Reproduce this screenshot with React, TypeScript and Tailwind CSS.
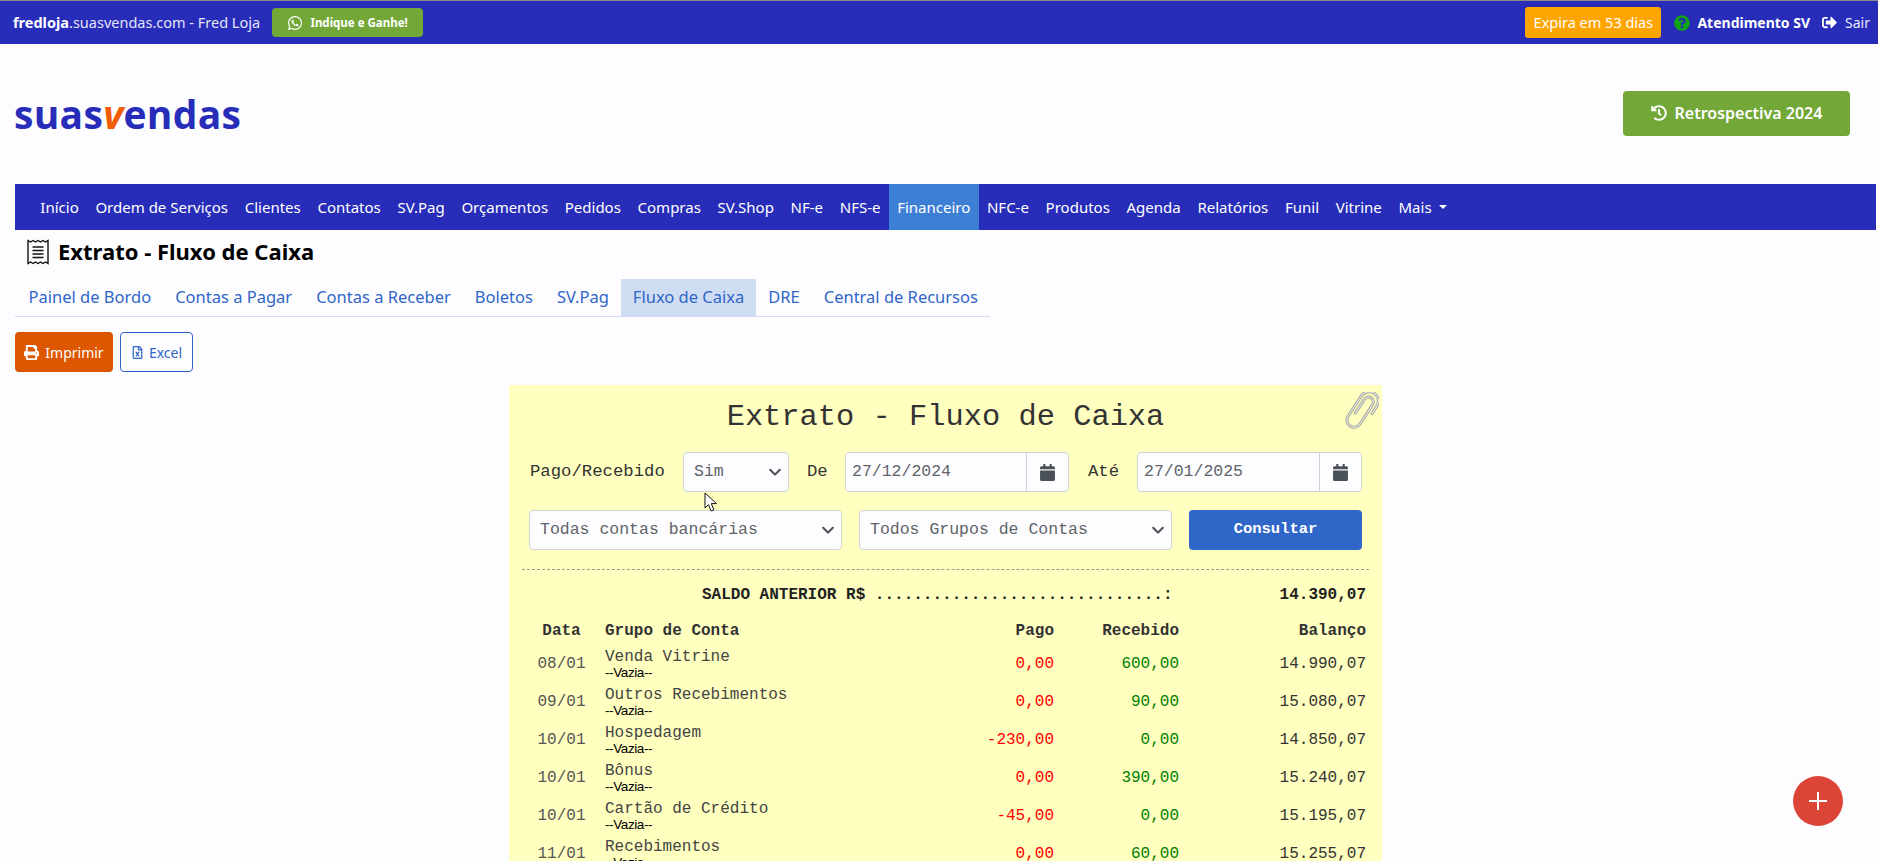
import React from "react";
import {
	FaWhatsapp,
	FaQuestionCircle,
	FaSignOutAlt,
	FaHistory,
	FaPrint,
	FaRegFileExcel,
	FaCalendar,
} from "react-icons/fa";

const navItems = [
	"Início",
	"Ordem de Serviços",
	"Clientes",
	"Contatos",
	"SV.Pag",
	"Orçamentos",
	"Pedidos",
	"Compras",
	"SV.Shop",
	"NF-e",
	"NFS-e",
	"Financeiro",
	"NFC-e",
	"Produtos",
	"Agenda",
	"Relatórios",
	"Funil",
	"Vitrine",
];

const tabs = [
	"Painel de Bordo",
	"Contas a Pagar",
	"Contas a Receber",
	"Boletos",
	"SV.Pag",
	"Fluxo de Caixa",
	"DRE",
	"Central de Recursos",
];

const rows = [
	["08/01", "Venda Vitrine", "0,00", "600,00", "14.990,07"],
	["09/01", "Outros Recebimentos", "0,00", "90,00", "15.080,07"],
	["10/01", "Hospedagem", "-230,00", "0,00", "14.850,07"],
	["10/01", "Bônus", "0,00", "390,00", "15.240,07"],
	["10/01", "Cartão de Crédito", "-45,00", "0,00", "15.195,07"],
	["11/01", "Recebimentos", "0,00", "60,00", "15.255,07"],
];

const Chevron = () => (
	<svg width="14" height="14" viewBox="0 0 16 16" fill="none" className="shrink-0">
		<path d="M2.5 5.5 8 11l5.500-5.500" stroke="#4b5057" strokeWidth="2.4" strokeLinecap="round" strokeLinejoin="round" />
	</svg>
);

const FakeSelect = ({ label, className }: { label: string; className: string }) => (
	<div className={`flex h-10 items-center justify-between rounded border border-[#ced4da] bg-[#fdfdff] pl-[10px] pr-[6px] text-[16.5px] text-[#5f6368] ${className}`}>
		<span>{label}</span>
		<Chevron />
	</div>
);

const DateField = ({ value, className }: { value: string; className: string }) => (
	<div className={`flex h-10 items-stretch rounded border border-[#ced4da] bg-[#fdfdff] text-[#5f6368] ${className}`}>
		<span className="flex flex-1 items-center pl-[6px] text-[16.5px]">{value}</span>
		<span className="flex w-[42px] items-center justify-center border-l border-[#ced4da]">
			<FaCalendar className="text-[17px] text-[#495057]" />
		</span>
	</div>
);

const ReceiptIcon = () => (
	<svg width="24" height="26" viewBox="0 0 24 26" fill="none" stroke="#111" strokeWidth="1.4">
		<path d="M2 1.500 4.500 3 7 1.500 9.500 3 12 1.500 14.500 3 17 1.500 19.500 3 22 1.500V24.500L19.500 23 17 24.500 14.500 23 12 24.500 9.500 23 7 24.500 4.500 23 2 24.500Z" />
		<path d="M6.500 8H17.500M6.500 11.500H17.500M6.500 15H17.500M6.500 18.500H17.500" strokeWidth="1.600" />
	</svg>
);

const clipPath = "M14 25V10a4.500 4.500 0 0 1 9 0V31a6.500 6.500 0 0 1-13 0V9a8.500 8.500 0 0 1 17 0V17";

const PaperClip = () => (
	<svg width="34" height="40" viewBox="2.500 3 31 36" fill="none" className="absolute right-[3px] top-[7px]">
		<g transform="rotate(33 18 20)" strokeLinecap="round" fill="none">
			<path d={clipPath} stroke="#a9aaa2" strokeWidth="2.800" />
			<path d={clipPath} stroke="#e6e6df" strokeWidth="1" />
		</g>
	</svg>
);

const MouseCursor = () => (
	<svg width="14" height="21" viewBox="0 0 14 21" className="absolute left-[195px] top-[107px]">
		<path d="M1 1v15l3.500-3.300 2.600 6.300 2.800-1.200-2.600-6.200H12.500Z" fill="#fff" stroke="#111" strokeWidth="1" />
	</svg>
);

const App = () => {
	return (
		<div className="relative h-screen overflow-hidden bg-[#fdfdff] font-['Noto_Sans',sans-serif]">
			<div className="h-px bg-[#8a8a8a]" />
			<div className="flex h-[43px] items-center justify-between bg-[#282db9] pl-[13px] pr-[8px] text-white">
				<div className="flex items-center">
					<span className="text-[14.500px] text-[#e4e5f8]">
						<b className="font-bold text-white">fredloja</b>.suasvendas.com - Fred Loja
					</span>
					<a className="ml-3 flex h-[29px] w-[151px] items-center justify-center gap-[7px] rounded bg-[#73a839] text-[11.500px] font-bold">
						<FaWhatsapp className="text-[16px]" />
						Indique e Ganhe!
					</a>
				</div>
				<div className="flex items-center">
					<span className="flex h-[31px] w-[136px] items-center justify-center rounded-[3px] bg-[#ffa500] text-[14.500px]">Expira em 53 dias</span>
					<span className="ml-[13px] flex h-[16px] w-[16px] items-center justify-center rounded-full bg-[#282db9]">
						<FaQuestionCircle className="text-[16px] text-[#12a512]" />
					</span>
					<b className="ml-[7px] text-[14px] font-bold">Atendimento SV</b>
					<FaSignOutAlt className="ml-[12px] text-[15px]" />
					<span className="ml-[8px] text-[14px] text-[#e9e9fa]">Sair</span>
				</div>
			</div>

			<div className="flex h-[140px] items-center justify-between pb-[2px] pl-[14px] pr-[28px]">
				<div className="font-['Open_Sans',sans-serif] text-[39px] font-bold leading-none tracking-[0.3px] text-[#282db9]">
					suas<span className="italic text-[#f25c05]">v</span>endas
				</div>
				<a className="flex h-[45px] w-[227px] items-center justify-center gap-[8px] rounded bg-[#73a839] text-[16px] font-semibold text-white">
					<FaHistory className="text-[16px]" />
					Retrospectiva 2024
				</a>
			</div>

			<nav className="ml-[15px] mr-[2px] flex h-[46px] items-stretch bg-[#282db9] pl-[17px] text-[15px] text-white">
				{navItems.map((item) => (
					<a key={item} className={`flex items-center whitespace-nowrap px-[8.350px] ${item === "Financeiro" ? "bg-[#3e7fd6]" : ""}`}>
						{item}
					</a>
				))}
				<a className="flex items-center gap-[7px] px-[8.350px]">
					Mais
					<span className="h-0 w-0 border-x-[4px] border-t-[4px] border-x-transparent border-t-white" />
				</a>
			</nav>

			<div className="flex h-[41px] items-center gap-[8px] pl-[26px] pt-[2px]">
				<ReceiptIcon />
				<h1 className="text-[22px] font-bold text-black">Extrato - Fluxo de Caixa</h1>
			</div>

			<div className="ml-[15px] flex h-[46px] w-[975px] items-stretch border-b border-[#cfddf3] pl-[1.500px] pt-[8px] text-[16.500px] text-[#2f66c8]">
				{tabs.map((tab) => (
					<a key={tab} className={`flex items-center whitespace-nowrap px-[12px] ${tab === "Fluxo de Caixa" ? "bg-[#cfddf3]" : ""}`}>
						{tab}
					</a>
				))}
			</div>

			<div className="ml-[15px] mt-[15px] flex gap-[7px]">
				<a className="flex h-10 w-[98px] items-center justify-center gap-[6px] rounded bg-[#dd5600] text-[14px] text-white">
					<FaPrint className="text-[15px]" />
					Imprimir
				</a>
				<a className="flex h-10 w-[73px] items-center justify-center gap-[5px] rounded border border-[#2f66c8] text-[14px] text-[#2f66c8]">
					<FaRegFileExcel className="text-[13px]" />
					Excel
				</a>
			</div>

			<div className="relative ml-[509px] mt-[13px] w-[873px] bg-[#ffffc0] px-[13px] pb-10 font-['Liberation_Mono',monospace] text-[#333]">
				<PaperClip />
				<MouseCursor />
				<h2 className="pt-[9px] text-center text-[30.400px] leading-[46px] text-[#333]">Extrato - Fluxo de Caixa</h2>

				<div className="mt-[12px] flex items-center pl-[8px]">
					<span className="w-[153px] text-[17.300px]">Pago/Recebido</span>
					<FakeSelect label="Sim" className="w-[106px]" />
					<span className="ml-[18px] w-[38px] text-[17.300px]">De</span>
					<DateField value="27/12/2024" className="w-[224px]" />
					<span className="ml-[19px] w-[49px] text-[17.300px]">Até</span>
					<DateField value="27/01/2025" className="w-[225px]" />
				</div>

				<div className="mt-[18px] flex gap-[17px] pl-[7px]">
					<FakeSelect label="Todas contas bancárias" className="w-[313px]" />
					<FakeSelect label="Todos Grupos de Contas" className="w-[313px]" />
					<a className="flex h-10 w-[173px] items-center justify-center rounded bg-[#2f66c8] text-[15.500px] font-bold text-white">Consultar</a>
				</div>

				<div className="mt-[19px] border-t border-dashed border-[#999]" />

				<div className="mt-[15px] flex whitespace-nowrap text-[16px] font-bold leading-[20px] text-[#222]">
					<span className="pl-[180px]">SALDO ANTERIOR R$ ..............................:</span>
					<span className="ml-auto pr-[3px]">14.390,07</span>
				</div>

				<div className="mt-[16px] grid grid-cols-[83px_1fr_125px_125px_187px] pr-[3px] text-[16px] font-bold leading-[20px]">
					<span className="pr-[4px] text-center">Data</span>
					<span>Grupo de Conta</span>
					<span className="text-right">Pago</span>
					<span className="text-right">Recebido</span>
					<span className="text-right">Balanço</span>
				</div>

				<div className="mt-[4px] flex flex-col">
					{rows.map((row, i) => (
						<div key={i} className="grid h-[38px] grid-cols-[83px_1fr_125px_125px_187px] items-center pr-[3px] text-[16px]">
							<span className="pr-[4px] text-center text-[#555]">{row[0]}</span>
							<div className="flex flex-col">
								<span className="leading-[18px] text-[#444]">{row[1]}</span>
								<span className="font-['Liberation_Sans',sans-serif] text-[13.500px] leading-[14px] tracking-[-0.4px] text-black">--Vazia--</span>
							</div>
							<span className="text-right text-[#ff0000]">{row[2]}</span>
							<span className="text-right text-[#008000]">{row[3]}</span>
							<span className="text-right">{row[4]}</span>
						</div>
					))}
				</div>
			</div>

			<a className="absolute left-[1793px] top-[776px] flex h-[50px] w-[50px] items-center justify-center rounded-full bg-[#db4437] text-white">
				<svg width="18" height="18" viewBox="0 0 18 18">
					<path d="M9 0v18M0 9h18" stroke="#fff" strokeWidth="2" />
				</svg>
			</a>
		</div>
	);
};

export default App;
